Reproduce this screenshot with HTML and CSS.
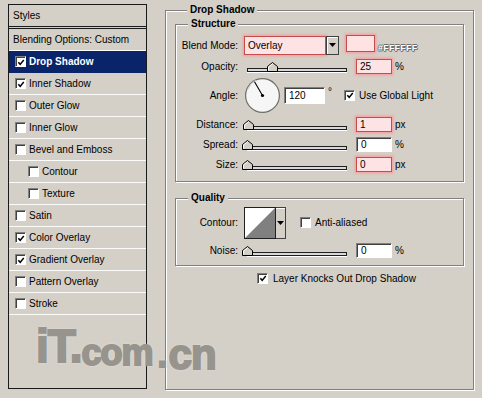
FILE: index.html
```html
<!DOCTYPE html>
<html>
<head>
<meta charset="utf-8">
<link rel="stylesheet" href="styles.css">
</head>
<body>
<div class="dialog">
  <div class="styles-panel">
    <div class="styles-head">Styles</div>
    <div class="styles-list">
      <div class="row plain">Blending Options: Custom</div>
      <div class="row sel"><span class="cb"><svg viewBox="0 0 9 9" width="9" height="9"><path d="M1.5 4.2 L3.6 6.6 L7.6 1.8" fill="none" stroke="#000" stroke-width="1.7"/></svg></span>Drop Shadow</div>
      <div class="row"><span class="cb"><svg viewBox="0 0 9 9" width="9" height="9"><path d="M1.5 4.2 L3.6 6.6 L7.6 1.8" fill="none" stroke="#000" stroke-width="1.7"/></svg></span>Inner Shadow</div>
      <div class="row"><span class="cb"></span>Outer Glow</div>
      <div class="row"><span class="cb"></span>Inner Glow</div>
      <div class="row"><span class="cb"></span>Bevel and Emboss</div>
      <div class="row sub"><span class="cb"></span>Contour</div>
      <div class="row sub"><span class="cb"></span>Texture</div>
      <div class="row"><span class="cb"></span>Satin</div>
      <div class="row"><span class="cb"><svg viewBox="0 0 9 9" width="9" height="9"><path d="M1.5 4.2 L3.6 6.6 L7.6 1.8" fill="none" stroke="#000" stroke-width="1.7"/></svg></span>Color Overlay</div>
      <div class="row"><span class="cb"><svg viewBox="0 0 9 9" width="9" height="9"><path d="M1.5 4.2 L3.6 6.6 L7.6 1.8" fill="none" stroke="#000" stroke-width="1.7"/></svg></span>Gradient Overlay</div>
      <div class="row"><span class="cb"></span>Pattern Overlay</div>
      <div class="row"><span class="cb"></span>Stroke</div>
    </div>
  </div>

  <div class="main">
    <div class="group outer">
      <div class="gtitle">Drop Shadow</div>

      <div class="group structure">
        <div class="gtitle">Structure</div>
        <div class="rows">
          <div class="frow h22">
            <span class="lbl">Blend Mode:</span>
            <div class="select">
              <div class="select-field hl">Overlay</div>
              <div class="select-btn"><svg viewBox="0 0 7 4" width="7" height="4"><path d="M0 0 H7 L3.5 4 Z" fill="#000"/></svg></div>
            </div>
            <div class="swatch hl"></div>
            <span class="hex">#FFFFFF</span>
          </div>
          <div class="frow h20">
            <span class="lbl">Opacity:</span>
            <div class="slider"><div class="track"></div><span class="thumb" style="left:20px"><svg viewBox="0 0 11 10" width="11" height="10"><path d="M0.5 9.5 V4.5 L5.5 0.5 L10.5 4.5 V9.5 Z" fill="#d4d0c8" stroke="#000"/><path d="M1.5 8.5 V5 L5.5 1.8" fill="none" stroke="#fff"/></svg></span></div>
            <div class="num hl">25</div>
            <span class="unit">%</span>
          </div>
          <div class="frow h38">
            <span class="lbl">Angle:</span>
            <svg class="dial" viewBox="0 0 37 37" width="37" height="37">
              <circle cx="18.5" cy="18.5" r="17.5" fill="#6f6d68"/>
              <circle cx="18.5" cy="18.5" r="16.3" fill="#f6f6f6"/>
              <path d="M4 12 A16 16 0 0 1 12 3" fill="none" stroke="#c8c8c8" stroke-width="1"/>
              <line x1="18.5" y1="18.5" x2="10.5" y2="4.8" stroke="#000" stroke-width="1.1"/>
              <circle cx="18.5" cy="18.5" r="1.6" fill="#000"/>
            </svg>
            <div class="num w41">120</div>
            <span class="deg">°</span>
            <span class="cb cb-gl"><svg viewBox="0 0 9 9" width="9" height="9"><path d="M1.5 4.2 L3.6 6.6 L7.6 1.8" fill="none" stroke="#000" stroke-width="1.7"/></svg></span>
            <span class="cbtext">Use Global Light</span>
          </div>
          <div class="frow h20">
            <span class="lbl">Distance:</span>
            <div class="slider"><div class="track"></div><span class="thumb" style="left:-4px"><svg viewBox="0 0 11 10" width="11" height="10"><path d="M0.5 9.5 V4.5 L5.5 0.5 L10.5 4.5 V9.5 Z" fill="#d4d0c8" stroke="#000"/><path d="M1.5 8.5 V5 L5.5 1.8" fill="none" stroke="#fff"/></svg></span></div>
            <div class="num hl">1</div>
            <span class="unit">px</span>
          </div>
          <div class="frow h20">
            <span class="lbl">Spread:</span>
            <div class="slider"><div class="track"></div><span class="thumb" style="left:-5px"><svg viewBox="0 0 11 10" width="11" height="10"><path d="M0.5 9.5 V4.5 L5.5 0.5 L10.5 4.5 V9.5 Z" fill="#d4d0c8" stroke="#000"/><path d="M1.5 8.5 V5 L5.5 1.8" fill="none" stroke="#fff"/></svg></span></div>
            <div class="num sunk">0</div>
            <span class="unit">%</span>
          </div>
          <div class="frow h20">
            <span class="lbl">Size:</span>
            <div class="slider"><div class="track"></div><span class="thumb" style="left:-5px"><svg viewBox="0 0 11 10" width="11" height="10"><path d="M0.5 9.5 V4.5 L5.5 0.5 L10.5 4.5 V9.5 Z" fill="#d4d0c8" stroke="#000"/><path d="M1.5 8.5 V5 L5.5 1.8" fill="none" stroke="#fff"/></svg></span></div>
            <div class="num hl">0</div>
            <span class="unit">px</span>
          </div>
        </div>
      </div>

      <div class="group quality">
        <div class="gtitle">Quality</div>
        <div class="rows qrows">
          <div class="frow h35">
            <span class="lbl">Contour:</span>
            <div class="contour">
              <svg class="contour-curve" viewBox="0 0 30 30" width="30" height="30">
                <rect width="30" height="30" fill="#fff"/>
                <path d="M0 30 L30 0 V30 Z" fill="#808080"/>
              </svg>
              <div class="contour-btn"><svg viewBox="0 0 7 4" width="7" height="4"><path d="M0 0 H7 L3.5 4 Z" fill="#000"/></svg></div>
            </div>
            <span class="cb cb-aa"></span>
            <span class="cbtext">Anti-aliased</span>
          </div>
          <div class="frow h20">
            <span class="lbl">Noise:</span>
            <div class="slider"><div class="track"></div><span class="thumb" style="left:-5px"><svg viewBox="0 0 11 10" width="11" height="10"><path d="M0.5 9.5 V4.5 L5.5 0.5 L10.5 4.5 V9.5 Z" fill="#d4d0c8" stroke="#000"/><path d="M1.5 8.5 V5 L5.5 1.8" fill="none" stroke="#fff"/></svg></span></div>
            <div class="num sunk">0</div>
            <span class="unit">%</span>
          </div>
        </div>
      </div>

      <div class="knock">
        <span class="cb"><svg viewBox="0 0 9 9" width="9" height="9"><path d="M1.5 4.2 L3.6 6.6 L7.6 1.8" fill="none" stroke="#000" stroke-width="1.7"/></svg></span>
        <span class="cbtext">Layer Knocks Out Drop Shadow</span>
      </div>
    </div>
  </div>

  <div class="watermark"><span class="wm-it">iT.</span><span class="wm-com">com</span><span class="wm-dot2">.</span><span class="wm-cn">cn</span></div>
</div>
</body>
</html>
```

FILE: styles.css
```css
* { box-sizing: border-box; }
html, body { margin: 0; padding: 0; }
body {
  background: #d4d0c8;
  font-family: "Liberation Sans", Arial, sans-serif;
  font-size: 10px;
  color: #000;
  width: 482px;
  height: 398px;
  overflow: hidden;
}
.dialog {
  position: relative;
  display: flex;
  align-items: flex-start;
  padding: 4px 0 0 8px;
  height: 398px;
}

/* ---------- left styles panel ---------- */
.styles-panel {
  width: 139px;
  height: 385px;
  border: 1px solid #1a1a1a;
  display: flex;
  flex-direction: column;
}
.styles-head {
  height: 22px;
  padding-left: 4px;
  line-height: 21px;
  border-bottom: 1px solid #1a1a1a;
}
.styles-list {
  margin-top: 1px;
  border-top: 1px solid #1a1a1a;
  flex: 1;
}
.row {
  height: 22px;
  border-bottom: 1px solid #fbfbfa;
  display: flex;
  align-items: center;
  padding-left: 6px;
  gap: 3px;
  white-space: nowrap;
}
.row.plain { padding-left: 4px; }
.row.sub { padding-left: 19px; }
.row.sel {
  background: #0a246a;
  color: #fff;
  font-weight: bold;
  border-bottom-color: #0a246a;
}

/* checkbox */
.cb {
  width: 11px;
  height: 11px;
  flex: none;
  background: #fff;
  border: 1px solid;
  border-color: #808080 #fff #fff #808080;
  box-shadow: inset 1px 1px 0 #404040;
  display: inline-flex;
  align-items: center;
  justify-content: center;
  padding: 1px 0 0 1px;
}
.cb svg { display: block; }

/* ---------- right side groups ---------- */
.main {
  margin-left: 18px;
  margin-top: 6px;
}
.group {
  border: 1px solid #808080;
  box-shadow: 1px 1px 0 #fff, inset 1px 1px 0 #fff;
}
.gtitle {
  width: max-content;
  margin: -8px 0 0 12px;
  padding: 0 3px;
  background: #d4d0c8;
  line-height: 14px;
  font-weight: bold;
}
.outer {
  width: 309px;
  height: 380px;
  padding: 0 9px;
}
.structure {
  margin-top: 7px;
  height: 158px;
}
.quality {
  margin-top: 16px;
  height: 68px;
}
.rows { padding-top: 3px; }
.qrows { padding-top: 0; }
.frow {
  display: flex;
  align-items: center;
  white-space: nowrap;
}
.h20 { height: 20px; }
.h22 { height: 22px; }
.h35 { height: 35px; }
.h38 { height: 38px; }
.lbl {
  width: 62px;
  text-align: right;
  margin-right: 6px;
  flex: none;
}

/* highlight (red edit marks) */
.hl {
  background: #fde3e3;
  border: 1px solid #c44c4c;
  box-shadow: 0 0 0 1px #f2a9a9, 0 0 3px 1px #f09a9a;
}

/* blend mode select */
.select { display: flex; height: 19px; }
.select-field {
  width: 82px;
  height: 19px;
  padding-left: 3px;
  line-height: 17px;
}
.select-btn {
  width: 13px;
  height: 19px;
  background: #d4d0c8;
  border: 1px solid #404040;
  box-shadow: inset 1px 1px 0 #fff;
  display: flex;
  align-items: center;
  justify-content: center;
}
.select-btn svg, .contour-btn svg { display: block; }
.swatch {
  width: 29px;
  height: 17px;
  margin-left: 7px;
  align-self: flex-start;
  margin-top: 1px;
  background: #ffe2e2;
}
.hex {
  margin-left: 3px;
  align-self: flex-start;
  margin-top: 9px;
  font-size: 9px;
  font-weight: bold;
  color: #fff;
  letter-spacing: 0.2px;
  text-shadow: 1px 0 0 #707070, -1px 0 0 #707070, 0 1px 0 #707070, 0 -1px 0 #707070, 1px 1px 0 #909090;
}

/* slider */
.slider {
  position: relative;
  width: 100px;
  height: 10px;
  margin-left: 3px;
  display: flex;
  align-items: flex-end;
  margin-top: 1px;
}
.track {
  width: 100%;
  height: 4px;
  border: 1px solid #1e1e1e;
  background: #d8d8d8;
  box-shadow: 0 1px 0 #fff;
}
.thumb {
  position: absolute;
  top: 0;
}
.thumb svg { display: block; }

/* numeric fields */
.num {
  width: 36px;
  height: 15px;
  margin-left: 9px;
  padding-left: 3px;
  line-height: 13px;
  flex: none;
}
.num.sunk, .num.w41 {
  background: #fff;
  border: 1px solid;
  border-color: #808080 #fff #fff #808080;
  box-shadow: inset 1px 1px 0 #404040;
  padding-left: 4px;
}
.num.w41 {
  width: 41px;
  height: 17px;
  margin-left: 3px;
  line-height: 15px;
}
.unit { margin-left: 3px; }
.deg {
  margin-left: 3px;
  align-self: flex-start;
  margin-top: 10px;
}
.cb-gl { margin-left: 12px; }
.cbtext { margin-left: 4px; }
.dial { flex: none; display: block; }

/* contour */
.contour { display: flex; height: 32px; }
.contour-curve {
  display: block;
  width: 32px;
  height: 32px;
  border: 1px solid #202020;
}
.contour-btn {
  width: 10px;
  height: 32px;
  border: 1px solid #404040;
  border-left: none;
  background: #d4d0c8;
  box-shadow: inset 0 1px 0 #fff;
  display: flex;
  justify-content: center;
  padding-top: 13px;
}
.cb-aa { margin-left: 14px; }

.knock {
  display: flex;
  align-items: center;
  margin-top: 5px;
  padding-left: 82px;
  height: 14px;
}
.knock .cbtext { margin-left: 5px; }

/* watermark overlay */
.watermark {
  position: absolute;
  left: 36px;
  top: 323px;
  font-family: "Liberation Sans", Arial, sans-serif;
  font-weight: bold;
  color: #97938d;
  -webkit-text-stroke: 2px #97938d;
  text-shadow: 0 0 2px #ebe9e5, 0 0 3px #ebe9e5;
  white-space: nowrap;
  line-height: 1;
  display: flex;
  align-items: baseline;
}
.wm-it { font-size: 46px; letter-spacing: -1px; }
.wm-com { font-size: 36px; letter-spacing: -1px; margin-left: 0; transform: translateY(3px); }
.wm-dot2 { font-size: 36px; margin-left: 5px; transform: translateY(5px); }
.wm-cn { font-size: 42px; letter-spacing: -1px; margin-left: 1px; transform: translateY(7px); }
```
